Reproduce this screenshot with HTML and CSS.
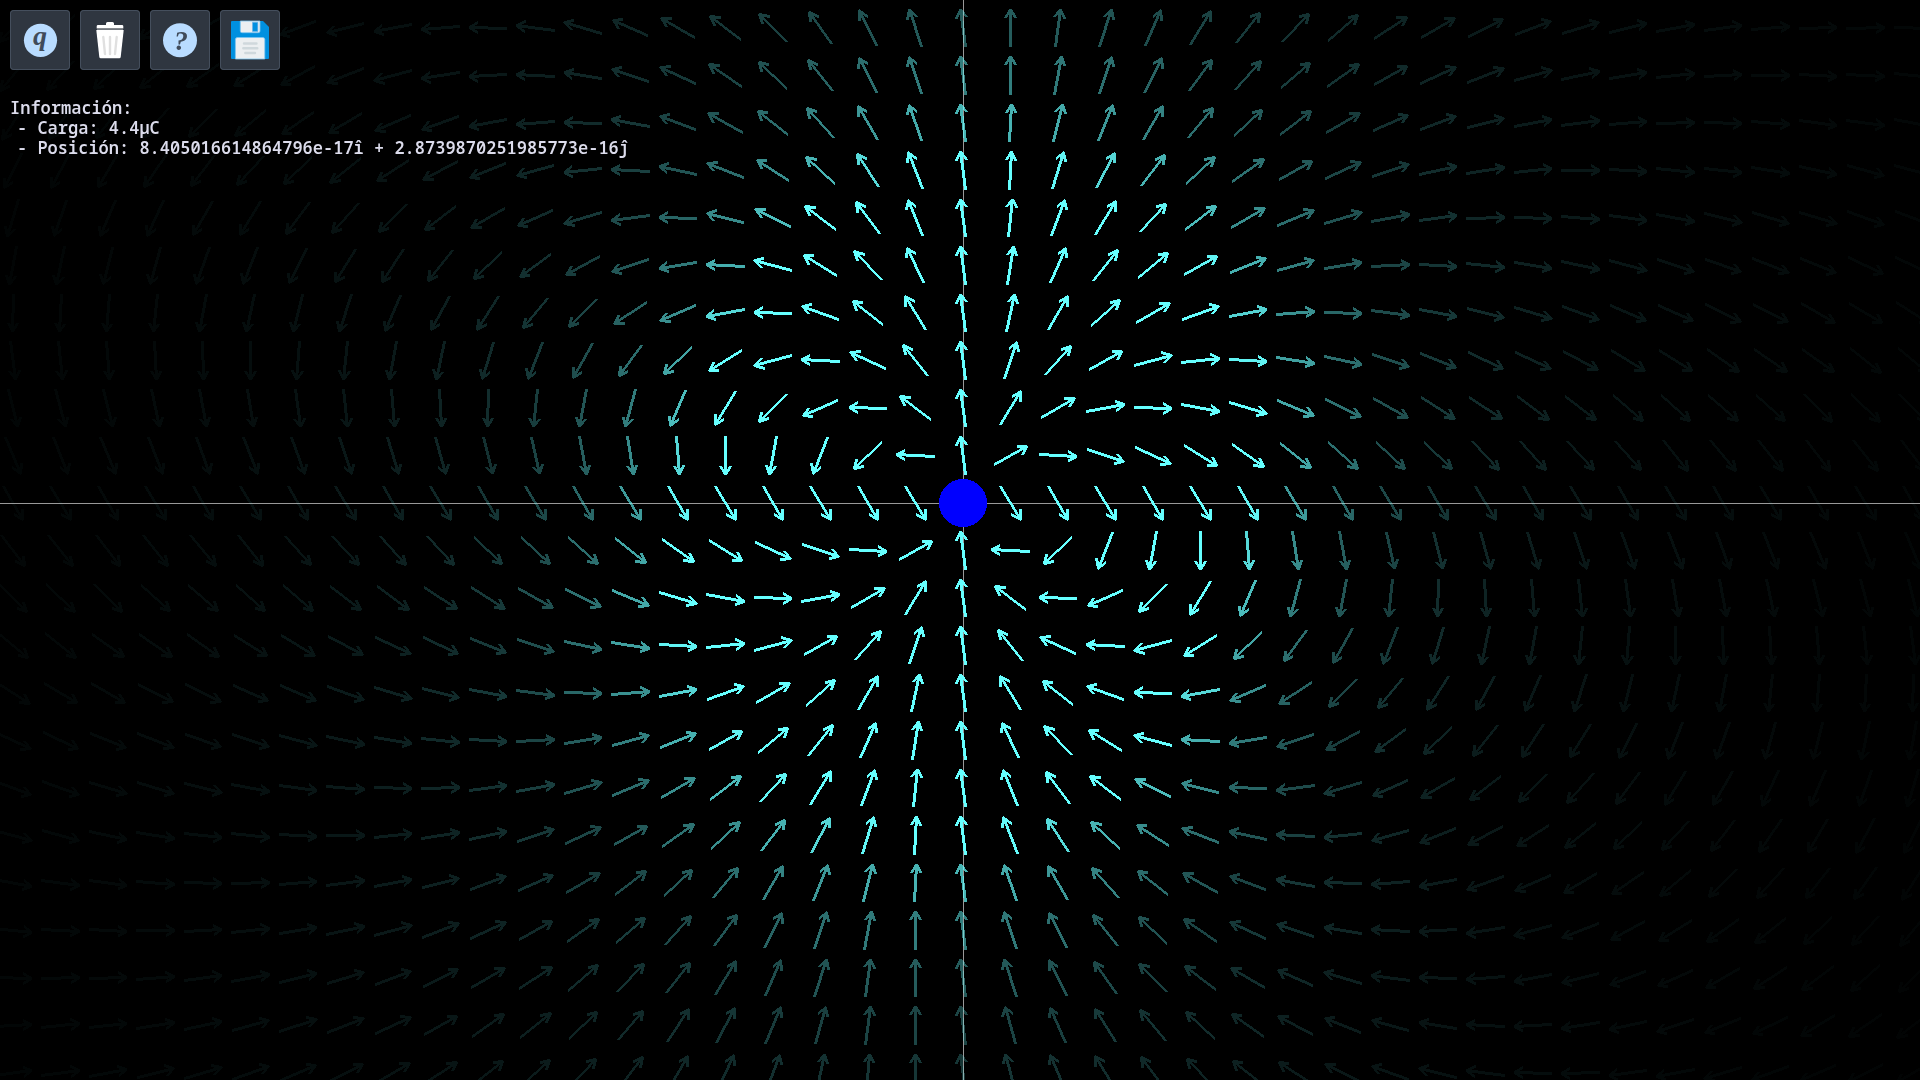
FILE: index.html
```html
<!DOCTYPE html>
<html lang="es">
<head>
<meta charset="utf-8">
<title>Campo eléctrico</title>
<link rel="stylesheet" href="styles.css">
</head>
<body>
<canvas class="field" id="field"></canvas>
<main class="overlay">
  <nav class="toolbar" aria-label="Herramientas">
    <button class="tool" type="button" aria-label="Agregar carga">
      <svg class="tool-icon" viewBox="0 0 60 60" aria-hidden="true">
        <circle class="disc" cx="30.5" cy="30.3" r="16.600"/>
        <text class="glyph" x="30" y="35">q</text>
      </svg>
    </button>
    <button class="tool" type="button" aria-label="Eliminar">
      <svg class="tool-icon" viewBox="0 0 60 60" aria-hidden="true">
        <path fill="#fff" d="M26 15v-1.500q0-1.500 1.500-1.500h5q1.500 0 1.500 1.500V15h8q1.300 0 1.300 1.300V18.500H16.700V16.300Q16.700 15 18 15z"/>
        <path fill="#72777d" d="M17 18.500h26v1.500H17z"/>
        <path fill="#fff" d="M16.300 20h27.400l-3 27q-.2 1.200-1.400 1.200H20.700q-1.200 0-1.400-1.200z"/>
        <path stroke="#e0e0e0" stroke-width="2.400" stroke-linecap="round" fill="none" d="M23.300 27l1.700 17M30 27v17M36.700 27L35 44"/>
      </svg>
    </button>
    <button class="tool" type="button" aria-label="Ayuda">
      <svg class="tool-icon" viewBox="0 0 60 60" aria-hidden="true">
        <circle class="disc" cx="30" cy="30.3" r="17"/>
        <text class="glyph" x="31" y="40">?</text>
      </svg>
    </button>
    <button class="tool" type="button" aria-label="Guardar">
      <svg class="tool-icon" viewBox="0 0 60 60" aria-hidden="true">
        <path fill="#0090e0" d="M12 11h31l6 6v31q0 1-1 1H12q-1 0-1-1V12q0-1 1-1z"/>
        <path fill="#eceff1" stroke="#7cc4f0" stroke-width=".8" d="M20.300 11H40v10q0 1.700-1.700 1.700H22q-1.700 0-1.700-1.700z"/>
        <path fill="#0090e0" stroke="#6bb0e8" stroke-width=".6" d="M32.500 12.300h5.300v9.200h-5.300z"/>
        <path fill="#eceff1" stroke="#7cc4f0" stroke-width=".8" d="M15.400 49V29.500q0-2 2-2h25.400q2 0 2 2V49z"/>
        <path stroke="#cfd8dc" stroke-width="2.400" stroke-linecap="round" d="M24 33.500h12.500M23.300 38.300h14M25.300 43h9.700"/>
      </svg>
    </button>
  </nav>
  <section class="info">
    <p class="info-title">Información:</p>
    <ul class="info-list">
      <li>- Carga: 4.4μC</li>
      <li>- Posición: 8.405016614864796e-17î + 2.8739870251985773e-16ĵ</li>
    </ul>
  </section>
</main>
<script src="field.js"></script>
</body>
</html>
```
FILE: styles.css
```css
body {
  margin: 0;
  background: #000;
  overflow: hidden;
}

.field {
  position: absolute;
  top: 0;
  left: 0;
  display: block;
}

.overlay {
  position: relative;
  display: flex;
  flex-direction: column;
  align-items: flex-start;
  gap: 28px;
  padding: 10px;
}

.toolbar {
  display: flex;
  gap: 10px;
}

.tool {
  width: 60px;
  height: 60px;
  padding: 0;
  background: #2f3640;
  border: 0;
  box-shadow: inset 0 0 0 1px #454f5d;
  border-radius: 4px;
  cursor: pointer;
}

.tool-icon {
  display: block;
  width: 60px;
  height: 60px;
}

.disc {
  fill: #b9dcff;
}

.glyph {
  fill: #404b5a;
  font-family: "Liberation Serif", serif;
  font-size: 28px;
  font-style: italic;
  font-weight: 700;
  text-anchor: middle;
}

.info {
  color: #dcdcec;
  font-family: "Noto Sans Mono", "DejaVu Sans Mono", monospace;
  font-size: 17px;
  font-weight: 600;
  line-height: 20px;
}

.info-title {
  margin: 0;
}

.info-list {
  margin: 0;
  padding: 0 0 0 7px;
  list-style: none;
  white-space: nowrap;
}
```
FILE: field.js
```js
const PITCH = 47.5;
const SHAFT = 38;
const BARB = 9.5;
const BARB_ANGLE = Math.PI / 6;
const MOMENT = { x: 1, y: 3.4 };
const GAIN = 52.5;

const canvas = document.getElementById("field");
const ctx = canvas.getContext("2d");

// Electric field of a dipole, in grid units with y pointing up.
function fieldAt(x, y) {
  const r = Math.hypot(x, y);
  const ux = x / r;
  const uy = y / r;
  const k = 3 * (MOMENT.x * ux + MOMENT.y * uy);
  return { x: (k * ux - MOMENT.x) / r ** 3, y: (k * uy - MOMENT.y) / r ** 3 };
}

// Aliased line, three pixels thick across its minor axis.
function addLine(pixels, x0, y0, x1, y1) {
  x0 = Math.floor(x0); y0 = Math.floor(y0);
  x1 = Math.floor(x1); y1 = Math.floor(y1);
  const dx = x1 - x0;
  const dy = y1 - y0;
  const flat = Math.abs(dx) > Math.abs(dy);
  const steps = Math.max(Math.abs(dx), Math.abs(dy)) || 1;
  for (let i = 0; i <= steps; i++) {
    const px = Math.round(x0 + dx * i / steps);
    const py = Math.round(y0 + dy * i / steps);
    for (let t = -1; t <= 1; t++) {
      pixels.add(flat ? px + "," + (py + t) : (px + t) + "," + py);
    }
  }
}

function drawArrow(cx, cy, angle, alpha) {
  const c = Math.cos(angle);
  const s = Math.sin(angle);
  const tipX = cx + c * SHAFT / 2;
  const tipY = cy - s * SHAFT / 2;
  const pixels = new Set();
  addLine(pixels, cx - c * SHAFT / 2, cy + s * SHAFT / 2, tipX, tipY);
  for (const side of [-1, 1]) {
    const a = angle + Math.PI + side * BARB_ANGLE;
    addLine(pixels, tipX, tipY, tipX + Math.cos(a) * BARB, tipY - Math.sin(a) * BARB);
  }
  ctx.beginPath();
  for (const p of pixels) {
    const [x, y] = p.split(",").map(Number);
    ctx.rect(x, y, 1, 1);
  }
  ctx.fillStyle = `rgba(102, 255, 255, ${alpha})`;
  ctx.fill();
}

function draw() {
  const w = canvas.width = window.innerWidth;
  const h = canvas.height = window.innerHeight;
  const ox = Math.round(w / 2) + 3;
  const oy = Math.round(h / 2) - 37;

  ctx.fillStyle = "#999";
  ctx.fillRect(0, oy, w, 1);
  ctx.fillRect(ox, 0, 1, h);

  const left = -Math.ceil(ox / PITCH);
  const right = Math.ceil((w - ox) / PITCH);
  const top = Math.ceil(oy / PITCH);
  const bottom = -Math.ceil((h - oy) / PITCH);
  for (let i = left; i <= right; i++) {
    for (let j = bottom; j <= top; j++) {
      if (i === 0 && j === 0) continue;
      const e = fieldAt(i, j);
      const alpha = Math.min(1, GAIN * Math.hypot(e.x, e.y));
      drawArrow(ox + i * PITCH, oy - j * PITCH, Math.atan2(e.y, e.x), alpha);
    }
  }

  // The charge itself
  ctx.fillStyle = "#00f";
  const radius = 24;
  for (let y = -radius; y < radius; y++) {
    const half = Math.round(Math.sqrt(radius * radius - (y + 0.5) ** 2));
    ctx.fillRect(ox - half, oy + y, 2 * half, 1);
  }
}

window.addEventListener("resize", draw);
draw();
```
